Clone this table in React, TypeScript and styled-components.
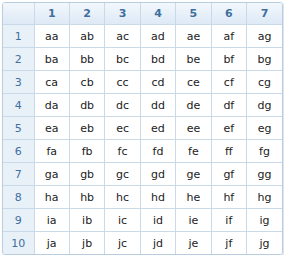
import React from "react";
import styled, { createGlobalStyle } from "styled-components";

const Global = createGlobalStyle`
  html, body { margin: 0; padding: 0; background: #ffffff; }
  body { font-family: "DejaVu Sans", Verdana, sans-serif; }
`;

const Wrap = styled.div`
  padding: 2px 0 0 2px;
`;

const Frame = styled.div`
  width: 279px;
  border: 1px solid #b9cde0;
  border-radius: 3px;
  overflow: hidden;
  box-shadow: 1px 1px 2px rgba(120, 150, 180, 0.35);
`;

const Table = styled.table`
  width: 100%;
  border-collapse: collapse;
  table-layout: fixed;
`;

const HeadCell = styled.th<{ $corner?: boolean }>`
  height: 21px;
  padding: 0;
  font-size: 11px;
  font-weight: bold;
  color: #3f6f9f;
  text-align: center;
  background: linear-gradient(#f2f7fc, #dde9f5);
  border-right: 1px solid #c9d9e8;
  border-bottom: 1px solid #c9d9e8;
  &:last-child { border-right: none; }
`;

const RowHead = styled.th`
  height: 22px;
  padding: 0;
  font-size: 11px;
  font-weight: normal;
  color: #3f6f9f;
  text-align: center;
  background: #e8f0f8;
  border-right: 1px solid #c9d9e8;
  border-bottom: 1px solid #c9d9e8;
`;

const Cell = styled.td`
  height: 22px;
  padding: 0;
  font-size: 11px;
  color: #222222;
  text-align: center;
  background: #ffffff;
  border-right: 1px solid #c9d9e8;
  border-bottom: 1px solid #c9d9e8;
  &:last-child { border-right: none; }
`;

const Row = styled.tr`
  &:last-child > * { border-bottom: none; }
`;

const cols = ["a", "b", "c", "d", "e", "f", "g"];
const rows = ["a", "b", "c", "d", "e", "f", "g", "h", "i", "j"];

export default function App() {
  return (
    <>
      <Global />
      <Wrap>
        <Frame>
          <Table>
            <colgroup>
              <col style={{ width: 31 }} />
              {cols.map((c) => (
                <col key={c} />
              ))}
            </colgroup>
            <thead>
              <tr>
                <HeadCell $corner />
                {cols.map((c, i) => (
                  <HeadCell key={c}>{i + 1}</HeadCell>
                ))}
              </tr>
            </thead>
            <tbody>
              {rows.map((r, ri) => (
                <Row key={r}>
                  <RowHead>{ri + 1}</RowHead>
                  {cols.map((c) => (
                    <Cell key={c}>{r + c}</Cell>
                  ))}
                </Row>
              ))}
            </tbody>
          </Table>
        </Frame>
      </Wrap>
    </>
  );
}
